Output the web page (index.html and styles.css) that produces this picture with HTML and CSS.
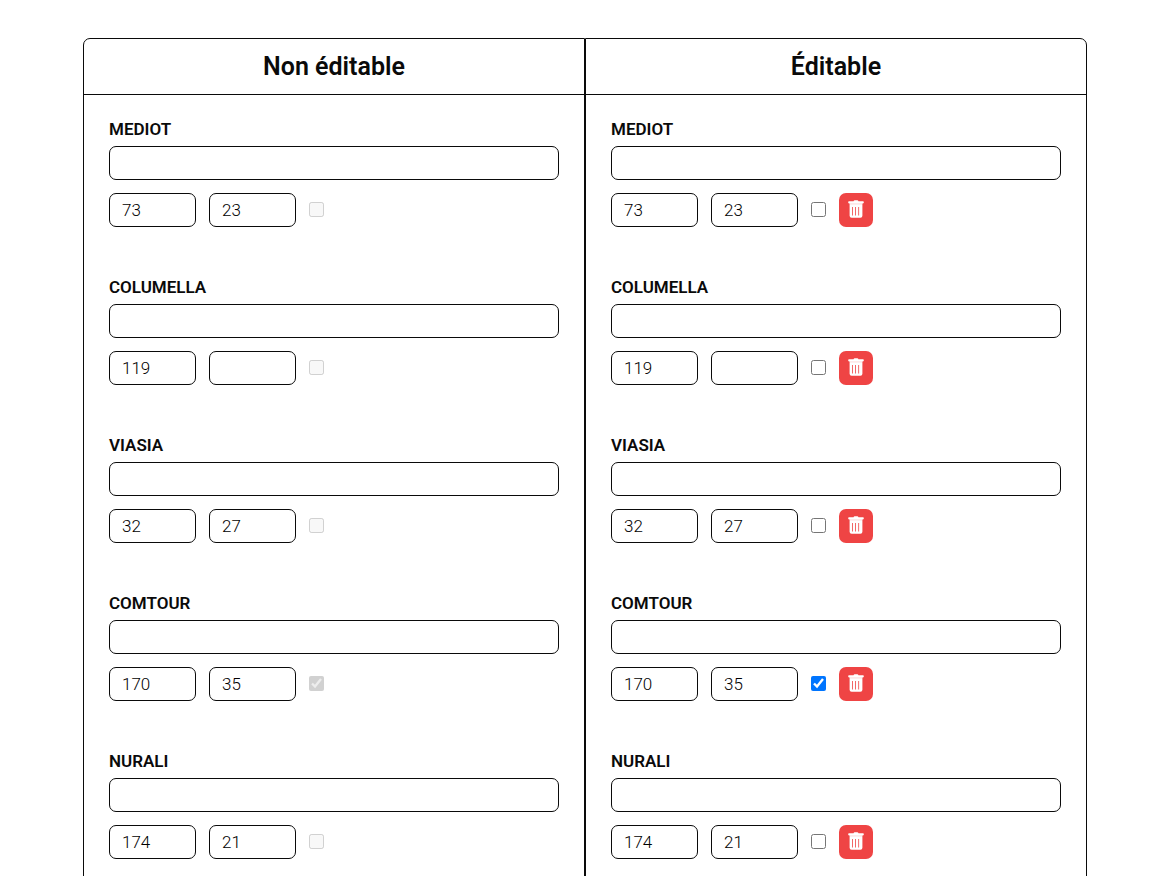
FILE: index.html
```
<!DOCTYPE html>
<html lang="fr">
<head>
<meta charset="utf-8">
<title>Non éditable / Éditable</title>
<link rel="stylesheet" href="styles.css">
</head>
<body>
<svg width="0" height="0" class="sprite" aria-hidden="true">
  <symbol id="trash" viewBox="0 0 16 18">
    <path fill-rule="evenodd" d="M5.500 1.300L6 .6Q6.200.3 6.600.3h2.800q.4 0 .6.300l.5.700H15q.8 0 .8.800v.5q0 .8-.8.800h-.6V15.800q0 2-2 2H3.600q-2 0-2-2V3.400H1q-.8 0-.8-.8v-.5q0-.8.8-.8zM4.100 7v8.500h.8V7zm3.100 0v8.500h.8V7zm3.100 0v8.500h.8V7z"/>
    <path d="M1.600 3.600h12.800v.7H1.600z" fill="#ef4444" opacity=".3"/>
  </symbol>
</svg>
<main class="board">
  <section class="panel" data-editable="false">
    <h2 class="panel-title">Non éditable</h2>
    <div class="list"></div>
  </section>
  <section class="panel" data-editable="true">
    <h2 class="panel-title">Éditable</h2>
    <div class="list"></div>
  </section>
</main>
<template id="entry">
  <div class="entry">
    <label class="name"></label>
    <input class="field text" type="text">
    <div class="row">
      <input class="field short first" type="text" inputmode="numeric">
      <input class="field short second" type="text" inputmode="numeric">
      <input class="check" type="checkbox">
      <button class="delete" type="button" aria-label="Supprimer"><svg class="icon" aria-hidden="true"><use href="#trash"/></svg></button>
    </div>
  </div>
</template>
<script src="script.js"></script>
</body>
</html>
```
FILE: styles.css
```
* { box-sizing: border-box; }
body {
  margin: 0;
  background: #fff;
  color: #0a0a0a;
  font: 17px/20px Roboto, "Liberation Sans", sans-serif;
}
.sprite { display: none; }
.board {
  display: grid;
  grid-template-columns: 1fr 1fr;
  margin: 38px 86px 0 83px;
}
.panel { border: 1px solid #0a0a0a; }
.panel:first-child { border-top-left-radius: 7px; }
.panel:last-child { border-top-right-radius: 7px; }
.panel-title {
  margin: 0;
  padding: 12px 25px 11px;
  border-bottom: 1px solid #0a0a0a;
  font-size: 25px;
  line-height: 32px;
  font-weight: 600;
  text-align: center;
}
.list {
  display: flex;
  flex-direction: column;
  gap: 50px;
  padding: 24px 25px;
}
.entry { display: flex; flex-direction: column; }
.name {
  margin-bottom: 7px;
  font-weight: 600;
}
.field {
  height: 34px;
  padding: 0 12px;
  border: 1px solid #0a0a0a;
  border-radius: 7px;
  background: #fff;
  color: #000;
  font: inherit;
  font-weight: 300;
}
.text { width: 100%; }
.row {
  display: flex;
  align-items: center;
  gap: 13px;
  margin-top: 13px;
}
.short { width: 87px; }
.check { width: 15px; height: 15px; margin: 0 0 2px; }
.delete {
  display: grid;
  place-items: center;
  width: 34px;
  height: 34px;
  padding: 0 0 2px;
  border: 0;
  border-radius: 7px;
  background: #ef4444;
  color: #fff;
}
.icon { width: 16px; height: 18px; fill: currentColor; }
```
FILE: script.js
```
const entries = [
  ["MEDIOT", "73", "23", false],
  ["COLUMELLA", "119", "", false],
  ["VIASIA", "32", "27", false],
  ["COMTOUR", "170", "35", true],
  ["NURALI", "174", "21", false]
];
const template = document.getElementById("entry");

document.querySelectorAll(".panel").forEach((panel, p) => {
  const editable = panel.dataset.editable === "true";
  entries.forEach(([name, first, second, checked], i) => {
    const node = template.content.cloneNode(true);
    const get = (s) => node.querySelector(s);
    const id = `entry-${p}-${i}`;
    get(".name").textContent = name;
    get(".name").htmlFor = id;
    get(".text").id = id;
    get(".first").value = first;
    get(".first").setAttribute("aria-label", `${name} 1`);
    get(".second").value = second;
    get(".second").setAttribute("aria-label", `${name} 2`);
    get(".check").checked = checked;
    get(".check").setAttribute("aria-label", name);
    if (!editable) {
      node.querySelectorAll(".field").forEach((f) => { f.readOnly = true; });
      get(".check").disabled = true;
      get(".delete").remove();
    }
    panel.querySelector(".list").append(node);
  });
});
```
